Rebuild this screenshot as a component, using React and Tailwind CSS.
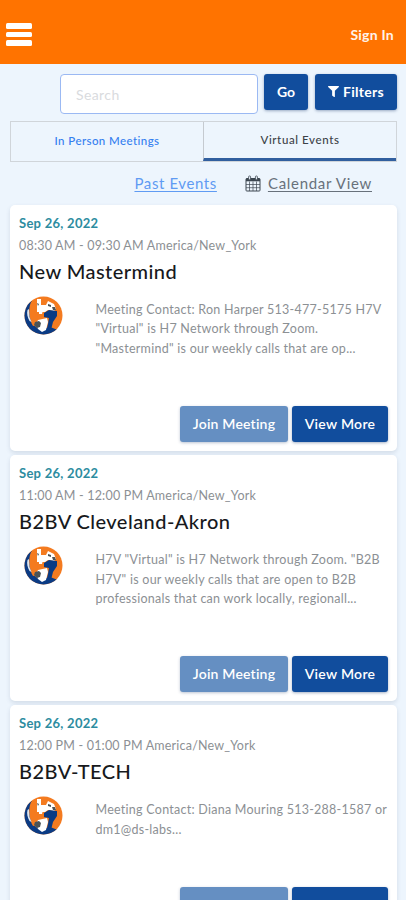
import React from 'react';
import { FaFilter } from 'react-icons/fa';

const events = [
  {
    date: 'Sep 26, 2022',
    time: '08:30 AM - 09:30 AM America/New_York',
    title: 'New Mastermind',
    lines: [
      'Meeting Contact: Ron Harper 513-477-5175 H7V',
      '"Virtual" is H7 Network through Zoom.',
      '"Mastermind" is our weekly calls that are op...',
    ],
  },
  {
    date: 'Sep 26, 2022',
    time: '11:00 AM - 12:00 PM America/New_York',
    title: 'B2BV Cleveland-Akron',
    lines: [
      'H7V "Virtual" is H7 Network through Zoom. "B2B',
      'H7V" is our weekly calls that are open to B2B',
      'professionals that can work locally, regionall...',
    ],
  },
  {
    date: 'Sep 26, 2022',
    time: '12:00 PM - 01:00 PM America/New_York',
    title: 'B2BV-TECH',
    lines: ['Meeting Contact: Diana Mouring 513-288-1587 or', 'dm1@ds-labs...'],
  },
];

const CalendarIcon = () => (
  <svg width="16" height="17" viewBox="0 0 16 17" fill="none" stroke="#3c4650">
    <rect x="1" y="3.5" width="14" height="12.5" rx="0.8" strokeWidth="1" />
    <path d="M1 3.500h14v2.800H1z" fill="#3c4650" stroke="none" />
    <path d="M4.500 6.500V16M8 6.500V16M11.500 6.500V16M1 9.500h14M1 12.700h14" strokeWidth="0.7" />
    <rect x="3.6" y="1" width="2" height="3.800" rx="0.800" fill="#eef5fd" strokeWidth="0.8" />
    <rect x="10.4" y="1" width="2" height="3.800" rx="0.800" fill="#eef5fd" strokeWidth="0.8" />
  </svg>
);

const GlobeLogo = () => (
  <svg width="39" height="39" viewBox="0 0 39 39">
    <defs>
      <clipPath id="globe">
        <circle cx="19.5" cy="19.5" r="19" />
      </clipPath>
    </defs>
    <g clipPath="url(#globe)">
      {/* orange disc, blue crescent on the left and bottom */}
      <rect width="39" height="39" fill="#f47b20" />
      <path d="M8 5L0 10v29h30l4-5-8-3-10 3-8-6-2-10z" fill="#0b3b84" />
      {/* orange H stem */}
      <path d="M7 6l7-3v12l-1 14-4 1C5 23 4 13 7 6z" fill="#f47b20" />
      {/* upper and lower land */}
      <path d="M13 3h4v6h5l2-4 6 3 2 5-2 2-6-1-3 2h-8z" fill="#fff" />
      <path d="M14 24l9-2 1 4-2 8-4 2-4-3-2-5z" fill="#fff" />
      <path d="M15 14h4l-1 4h-3z" fill="#fff" />
      <path d="M3.500 14l1.500-1 .5 8 2 5-2-1c-2-4-3-7-2-11z" fill="#dfe6ee" />
      {/* blue seven */}
      <path d="M20 17l5-3 8 1v5l-4 6-2 8-5 2 2-8 1-6-5-1z" fill="#0b3b84" />
      <path d="M11 26l4-1 2 2-1 4-3 1-3-3zM13 7l2 1-1 2zM24 8l3 1v2l-3-1zM28 11l3 0 1 3-3 0z" fill="#4b5357" />
    </g>
  </svg>
);

const EventCard = ({ event }) => (
  <article className="rounded-[5px] bg-white px-[9px] pt-[8px] pb-[9px] shadow-[0_2px_4px_rgba(70,90,120,0.16)]">
    <div className="h-[20px] text-[13px] leading-[20px] font-bold tracking-[0.28px] text-[#2d8ca0]">{event.date}</div>
    <div className="mt-[3px] h-[19px] text-[12.500px] leading-[19px] tracking-[0.2px] text-[#8c9094]">{event.time}</div>
    <h2 className="mt-[3px] h-[27px] text-[20px] leading-[27px] font-medium tracking-[0.45px] whitespace-nowrap text-[#17191c]">{event.title}</h2>
    <div className="mt-[11px] flex">
      <div className="ml-[5px] w-[71.500px] shrink-0">
        <GlobeLogo />
      </div>
      <div className="pt-[4px] text-[12.500px] leading-[19.400px] tracking-[0.26px] whitespace-nowrap text-[#8c9094]">
        {event.lines.map((line) => (
          <div key={line}>{line}</div>
        ))}
      </div>
    </div>
    <div className="mt-[48px] flex justify-end gap-1 text-[14px] font-semibold text-white">
      <button className="h-[36px] w-[108px] rounded-[3px] bg-[#658fc2] pb-[2px] tracking-[0.2px] shadow-[0_1px_3px_rgba(30,60,110,0.3)]">Join Meeting</button>
      <button className="h-[36px] w-[96px] rounded-[3px] bg-[#114d9d] pb-[2px] tracking-[0.3px] shadow-[0_1px_3px_rgba(30,60,110,0.4)]">View More</button>
    </div>
  </article>
);

export default function App() {
  return (
    <div className="h-[900px] w-[406px] overflow-hidden bg-[#edf5fd] font-['Lato',sans-serif]">
      <header className="flex h-[64px] items-center justify-between bg-[#ff7300] pt-[5px] pr-[12px] pl-[6px]">
        <div className="flex flex-col gap-[3px]">
          <div className="h-[5.500px] w-[26px] rounded-[1.500px] bg-white"></div>
          <div className="h-[5.500px] w-[26px] rounded-[1.500px] bg-white"></div>
          <div className="h-[5.500px] w-[26px] rounded-[1.500px] bg-white"></div>
        </div>
        <span className="text-[14px] font-bold tracking-[0.25px] text-[#fff3ea]">Sign In</span>
      </header>

      <div className="mt-[10px] flex h-[47px] items-start pr-[9px] pl-[60px]">
        <input
          placeholder="Search"
          className="h-[40px] w-[198px] rounded-[4px] border border-[#9bb9f3] bg-white px-[15px] text-[14px] tracking-[0.4px] placeholder:text-[#d9dbde]"
        />
        <button className="ml-[6px] h-[36px] w-[44px] rounded-[3px] bg-[#114d9d] pb-[2px] text-[14px] font-bold text-white shadow-[0_1px_3px_rgba(30,60,110,0.4)]">Go</button>
        <button className="ml-[7px] flex h-[36px] w-[82px] items-center justify-center gap-[4px] rounded-[3px] bg-[#114d9d] pb-[1px] text-[14px] font-bold text-white shadow-[0_1px_3px_rgba(30,60,110,0.4)]">
          <FaFilter size={11} />
          <span className="tracking-[0.3px]">Filters</span>
        </button>
      </div>

      <nav className="mx-[10px] flex h-[41px] w-[387px] border border-[#d0d5da] text-[11.500px] font-medium">
        <div className="flex w-[192px] items-center justify-center pb-[2px] text-[#347ff0]">
          <span className="tracking-[0.42px]">In Person Meetings</span>
        </div>
        <div className="flex flex-1 items-center justify-center border-b-[3px] border-l border-b-[#315f9f] border-l-[#c5cad0] text-[#3c4248]">
          <span className="tracking-[0.6px]">Virtual Events</span>
        </div>
      </nav>

      <div className="flex h-[43px] items-center justify-end pr-[34px] text-[15px]">
        <a className="tracking-[0.6px] text-[#5f9bf3] underline underline-offset-2">Past Events</a>
        <span className="mr-[7px] ml-[28px]">
          <CalendarIcon />
        </span>
        <a className="tracking-[0.7px] text-[#68717b] underline underline-offset-2">Calendar View</a>
      </div>

      <main className="ml-[10px] flex w-[387px] flex-col gap-1">
        {events.map((event) => (
          <EventCard key={event.title} event={event} />
        ))}
      </main>
    </div>
  );
}
